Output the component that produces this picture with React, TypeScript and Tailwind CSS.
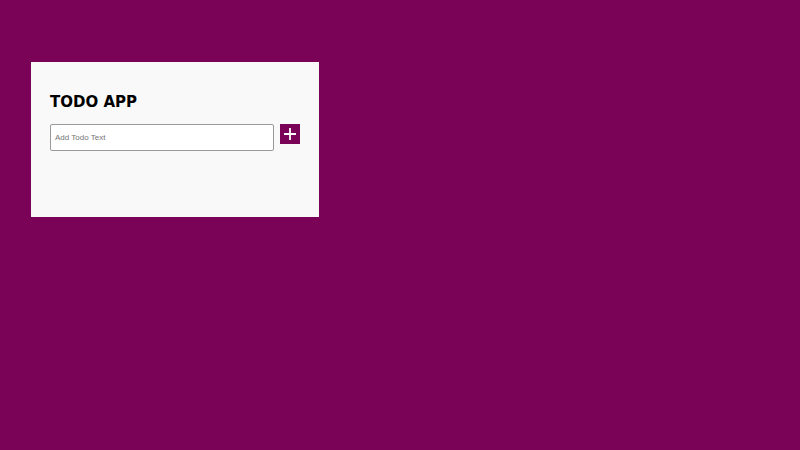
import React from "react";

export default function App() {
  return (
    <div className="min-h-screen w-full bg-[#7b0357] pl-[31px] pt-[62px]">
      <div className="w-[288px] h-[155px] bg-[#f9f9f9] px-[19px] pt-[31px]">
        <h1 className="text-[15px] leading-[18px] font-bold text-black [font-family:'DejaVu_Sans',sans-serif]">
          TODO APP
        </h1>
        <div className="mt-[13px] flex items-start gap-[6px]">
          <input
            type="text"
            placeholder="Add Todo Text"
            className="w-[224px] h-[27px] rounded-[2px] border border-[#9a9a9a] bg-white px-[4px] text-[8px] text-black placeholder:text-[#757575] outline-none [font-family:'Liberation_Sans',Arial,sans-serif]"
          />
          <button className="w-[20px] h-[20px] bg-[#7b0357] flex items-center justify-center">
            <svg width="14" height="14" viewBox="0 0 14 14">
              <path d="M7 1v12M1 7h12" stroke="white" strokeWidth="1.8" />
            </svg>
          </button>
        </div>
      </div>
    </div>
  );
}
